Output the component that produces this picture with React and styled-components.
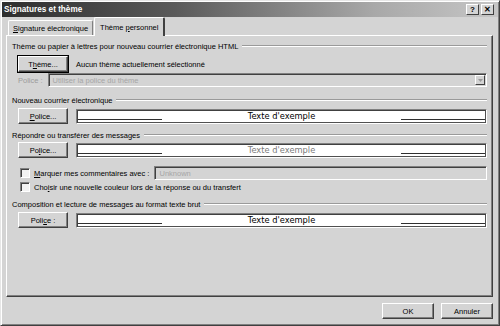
import React from 'react';
import styled, { createGlobalStyle } from 'styled-components';

const GlobalStyle = createGlobalStyle`
    html, body {
        margin: 0;
        padding: 0;
        background: #d4d4d4;
    }
    * {
        box-sizing: border-box;
    }
`;

const Window = styled.div`
    width: 500px;
    height: 326px;
    display: flex;
    flex-direction: column;
    background: #d4d4d4;
    border-top: 1px solid #e6e6e6;
    border-left: 1px solid #e6e6e6;
    border-right: 1px solid #404040;
    border-bottom: 1px solid #404040;
    box-shadow: inset 1px 1px 0 #ffffff, inset -1px -1px 0 #808080;
    padding: 1px;
    font-family: 'Liberation Sans', Arial, sans-serif;
    font-size: 7.5px;
    color: #000;
    white-space: nowrap;
`;

const TitleBar = styled.div`
    height: 15px;
    display: flex;
    align-items: center;
    justify-content: space-between;
    padding: 0 4px 0 2px;
    background: linear-gradient(to right, #2e2e2e 0%, #5a5a5a 35%, #a8a8a8 75%, #c6c6c6 100%);
`;

const Title = styled.span`
    color: #fff;
    font-weight: bold;
    font-size: 8.2px;
`;

const CapButtons = styled.div`
    display: flex;
    gap: 2px;
`;

const CapButton = styled.div`
    width: 13px;
    height: 11px;
    display: flex;
    align-items: center;
    justify-content: center;
    background: #d4d4d4;
    border-top: 1px solid #fff;
    border-left: 1px solid #fff;
    border-right: 1px solid #404040;
    border-bottom: 1px solid #404040;
    font-weight: bold;
    font-size: 8px;
    line-height: 1;
`;

const Body = styled.div`
    flex: 1;
    display: flex;
    flex-direction: column;
    padding: 0 5px 0 4px;
`;

const Tabs = styled.div`
    display: flex;
    align-items: flex-end;
    height: 18px;
    padding-left: 2px;
    position: relative;
    z-index: 1;
`;

const Tab = styled.div`
    height: ${(p) => (p.$active ? '19px' : '15px')};
    margin-bottom: ${(p) => (p.$active ? '-1px' : '0')};
    margin-left: ${(p) => (p.$active ? '1px' : '0')};
    padding: 0 ${(p) => (p.$active ? 5 : 4)}px;
    display: flex;
    align-items: center;
    background: #d4d4d4;
    border-top: 1px solid #fff;
    border-left: 1px solid #fff;
    border-right: ${(p) => (p.$active ? '2px solid #404040' : '1px solid #808080')};
    border-radius: 2px 2px 0 0;
`;

const Panel = styled.div`
    height: 262px;
    display: flex;
    flex-direction: column;
    padding: 4px 5px 0 5px;
    border-top: 1px solid #fff;
    border-left: 1px solid #fff;
    border-right: 1px solid #404040;
    border-bottom: 1px solid #404040;
    box-shadow: inset -1px -1px 0 #808080;
`;

const SectionHead = styled.div`
    display: flex;
    align-items: center;
    gap: 4px;
    height: 12px;
    margin-top: ${(p) => p.$top || 0}px;
`;

const Etch = styled.div`
    flex: 1;
    height: 2px;
    border-top: 1px solid #9a9a9a;
    border-bottom: 1px solid #fff;
`;

const Row = styled.div`
    display: flex;
    align-items: center;
    gap: ${(p) => p.$gap || 8}px;
    padding-left: 6px;
    margin-top: ${(p) => p.$top || 0}px;
`;

const Button = styled.div`
    width: ${(p) => p.$w || 50}px;
    height: 16px;
    flex-shrink: 0;
    display: flex;
    align-items: center;
    justify-content: center;
    background: #d4d4d4;
    border-top: 1px solid #fff;
    border-left: 1px solid #fff;
    border-right: 1px solid #404040;
    border-bottom: 1px solid #404040;
    box-shadow: inset -1px -1px 0 #808080;
    outline: ${(p) => (p.$default ? '1px solid #000' : 'none')};
`;

const U = styled.span`
    text-decoration: underline;
`;

const Sample = styled.div`
    flex: 1;
    height: 15px;
    display: flex;
    align-items: center;
    justify-content: space-between;
    padding: 0 1px;
    background: #fff;
    border-top: 1px solid #808080;
    border-left: 1px solid #808080;
    border-right: 1px solid #fff;
    border-bottom: 1px solid #fff;
    box-shadow: inset 1px 1px 0 #404040, inset -1px -1px 0 #505050;
`;

const SampleLine = styled.div`
    width: 84px;
    height: 1px;
    align-self: flex-end;
    margin-bottom: 3px;
    background: #303030;
`;

const SampleText = styled.span`
    font-family: 'DejaVu Sans', Verdana, sans-serif;
    font-size: 8.3px;
    color: ${(p) => (p.$muted ? '#7a7a7a' : '#000')};
`;

const Muted = styled.span`
    color: #9c9c9c;
    flex-shrink: 0;
`;

const Field = styled.div`
    flex: 1;
    height: 14px;
    display: flex;
    align-items: center;
    padding-left: 4px;
    color: #a6a6a6;
    background: #d4d4d4;
    border-top: 1px solid #808080;
    border-left: 1px solid #808080;
    border-right: 1px solid #fff;
    border-bottom: 1px solid #fff;
    box-shadow: inset 1px 1px 0 #404040;
`;

const Grow = styled.span`
    flex: 1;
`;

const DropArrow = styled.div`
    width: 10px;
    height: 10px;
    margin-right: 1px;
    display: flex;
    align-items: center;
    justify-content: center;
    border-top: 1px solid #fff;
    border-left: 1px solid #fff;
    border-right: 1px solid #404040;
    border-bottom: 1px solid #404040;
`;

const CheckRow = styled.div`
    display: flex;
    align-items: center;
    gap: 4px;
    height: ${(p) => p.$h || 14}px;
    padding-left: 8px;
    margin-top: ${(p) => p.$top || 0}px;
`;

const Check = styled.div`
    width: 10px;
    height: 10px;
    flex-shrink: 0;
    background: #f2f2f2;
    border-top: 1px solid #808080;
    border-left: 1px solid #808080;
    border-right: 1px solid #fff;
    border-bottom: 1px solid #fff;
    box-shadow: inset 1px 1px 0 #404040;
`;

const CheckLabel = styled.span`
    flex-shrink: 0;
    margin-right: ${(p) => p.$gap || 0}px;
`;

const Footer = styled.div`
    flex: 1;
    display: flex;
    justify-content: flex-end;
    align-items: flex-start;
    gap: 7px;
    padding-top: 6px;
`;

function SampleBox({ muted }) {
    return (
        <Sample>
            <SampleLine />
            <SampleText $muted={muted}>Texte d'exemple</SampleText>
            <SampleLine />
        </Sample>
    );
}

export default function App() {
    return (
        <>
            <GlobalStyle />
            <Window>
                <TitleBar>
                    <Title>Signatures et thème</Title>
                    <CapButtons>
                        <CapButton>?</CapButton>
                        <CapButton>✕</CapButton>
                    </CapButtons>
                </TitleBar>
                <Body>
                    <Tabs>
                        <Tab><span><U>S</U>ignature électronique</span></Tab>
                        <Tab $active><span>Thème <U>p</U>ersonnel</span></Tab>
                    </Tabs>
                    <Panel>
                        <SectionHead>
                            <span>Thème ou papier à lettres pour nouveau courrier électronique HTML</span>
                            <Etch />
                        </SectionHead>
                        <Row $top={4}>
                            <Button $default><span>T<U>h</U>ème...</span></Button>
                            <span>Aucun thème actuellement sélectionné</span>
                        </Row>
                        <Row $top={1} $gap={5}>
                            <Muted>Police :</Muted>
                            <Field>
                                <Grow>Utiliser la police du thème</Grow>
                                <DropArrow>
                                    <svg width="5" height="3" viewBox="0 0 5 3">
                                        <path d="M0 0h5L2.5 3z" fill="#9a9a9a" />
                                    </svg>
                                </DropArrow>
                            </Field>
                        </Row>
                        <SectionHead $top={7}>
                            <span>Nouveau courrier électronique</span>
                            <Etch />
                        </SectionHead>
                        <Row $top={2}>
                            <Button><span><U>P</U>olice...</span></Button>
                            <SampleBox />
                        </Row>
                        <SectionHead $top={5}>
                            <span>Répondre ou transférer des messages</span>
                            <Etch />
                        </SectionHead>
                        <Row $top={1}>
                            <Button><span>Po<U>l</U>ice...</span></Button>
                            <SampleBox muted />
                        </Row>
                        <CheckRow $top={8}>
                            <Check />
                            <CheckLabel $gap={1}><U>M</U>arquer mes commentaires avec :</CheckLabel>
                            <Field>Unknown</Field>
                        </CheckRow>
                        <CheckRow>
                            <Check />
                            <span>Cho<U>i</U>sir une nouvelle couleur lors de la réponse ou du transfert</span>
                        </CheckRow>
                        <SectionHead $top={4}>
                            <span>Composition et lecture de messages au format texte brut</span>
                            <Etch />
                        </SectionHead>
                        <Row $top={2}>
                            <Button><span>Poli<U>c</U>e :</span></Button>
                            <SampleBox />
                        </Row>
                    </Panel>
                    <Footer>
                        <Button $w={52}>OK</Button>
                        <Button $w={52}>Annuler</Button>
                    </Footer>
                </Body>
            </Window>
        </>
    );
}
